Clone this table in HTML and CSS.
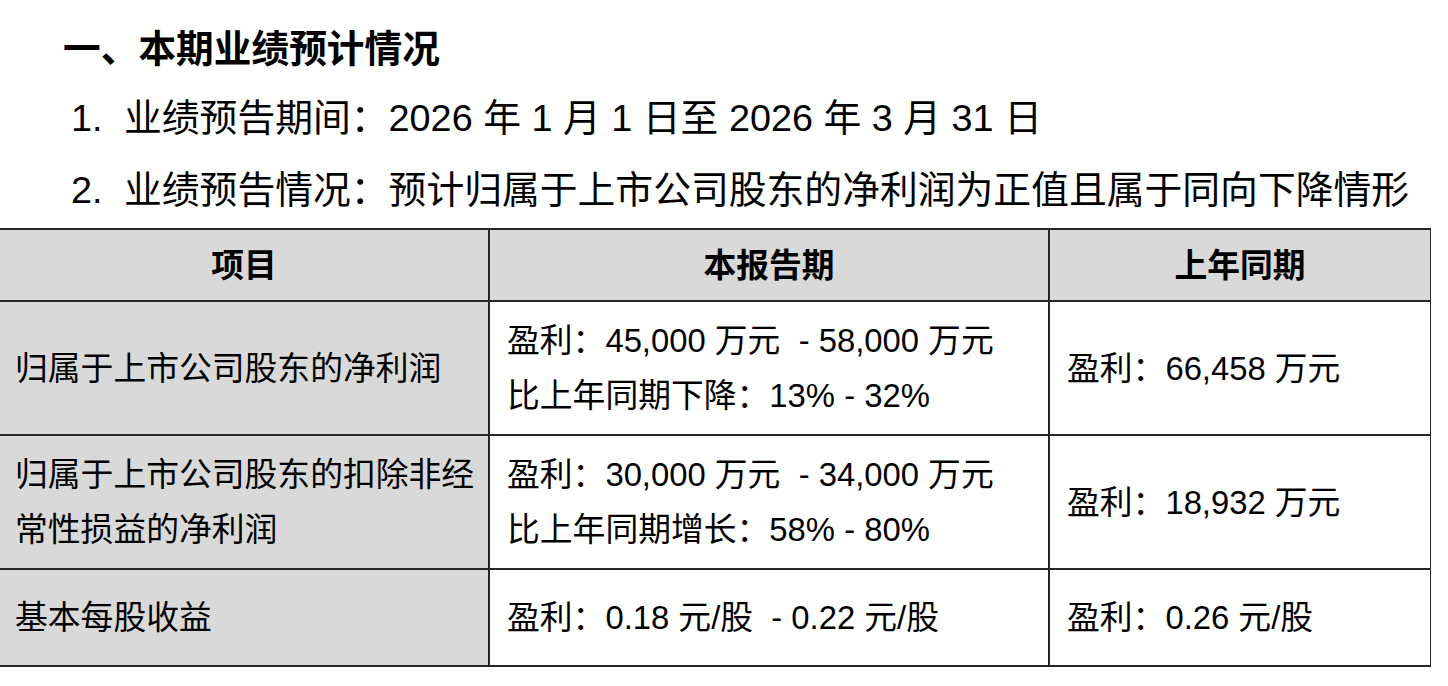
FILE: index.html
```html
<!DOCTYPE html>
<html lang="zh-CN">
<head>
<meta charset="utf-8">
<title>本期业绩预计情况</title>
<link rel="stylesheet" href="styles.css">
</head>
<body>
<div class="page">
  <h2 class="section-title">一、本期业绩预计情况</h2>
  <p class="item"><span class="num">1.</span>业绩预告期间：2026 年 1 月 1 日至 2026 年 3 月 31 日</p>
  <p class="item"><span class="num">2.</span>业绩预告情况：预计归属于上市公司股东的净利润为正值且属于同向下降情形</p>
  <table class="forecast">
    <thead>
      <tr class="head-row">
        <th class="c1">项目</th>
        <th class="c2">本报告期</th>
        <th class="c3">上年同期</th>
      </tr>
    </thead>
    <tbody>
      <tr class="row-tall">
        <td class="c1 label">归属于上市公司股东的净利润</td>
        <td class="c2">盈利：45,000 万元&nbsp; - 58,000 万元<br>比上年同期下降：13% - 32%</td>
        <td class="c3">盈利：66,458 万元</td>
      </tr>
      <tr class="row-tall">
        <td class="c1 label">归属于上市公司股东的扣除非经<br>常性损益的净利润</td>
        <td class="c2">盈利：30,000 万元&nbsp; - 34,000 万元<br>比上年同期增长：58% - 80%</td>
        <td class="c3">盈利：18,932 万元</td>
      </tr>
      <tr class="row-short">
        <td class="c1 label">基本每股收益</td>
        <td class="c2">盈利：0.18 元/股&nbsp; - 0.22 元/股</td>
        <td class="c3">盈利：0.26 元/股</td>
      </tr>
    </tbody>
  </table>
</div>
</body>
</html>
```

FILE: styles.css
```css
html, body {
  margin: 0;
  padding: 0;
  background: #ffffff;
}

.page {
  padding-top: 10px;
  color: #000000;
  font-family: "Liberation Sans", "Noto Sans CJK SC", sans-serif;
}

.section-title {
  margin: 0;
  padding-left: 63px;
  font-family: "Noto Sans CJK SC", sans-serif;
  font-size: 37.7px;
  font-weight: 700;
  line-height: 72px;
  white-space: nowrap;
}

.item {
  margin: 0;
  padding-left: 71px;
  font-size: 37.8px;
  line-height: 72px;
  white-space: nowrap;
}

.num {
  display: inline-block;
  width: 53px;
}

.forecast {
  margin-top: 2px;
  table-layout: fixed;
  border-collapse: separate;
  border-spacing: 0;
  width: 1431px;
  border-top: 2px solid #262626;
  font-size: 32.8px;
  white-space: nowrap;
}

.forecast th,
.forecast td {
  box-sizing: border-box;
  padding: 0 0 0 17px;
  border-right: 2px solid #262626;
  border-bottom: 2px solid #262626;
  text-align: left;
  vertical-align: middle;
  line-height: 55px;
}

.forecast th {
  padding: 0;
  text-align: center;
  font-weight: 700;
  background: #d9d9d9;
}

.forecast .c1 { width: 490px; }
.forecast .c2 { width: 560px; }
.forecast .c3 { width: 381px; border-right-width: 1px; }

.forecast td.label {
  padding-left: 15px;
  background: #d9d9d9;
}

.head-row { height: 72px; }
.row-tall { height: 134px; }
.row-short { height: 97px; }
```
